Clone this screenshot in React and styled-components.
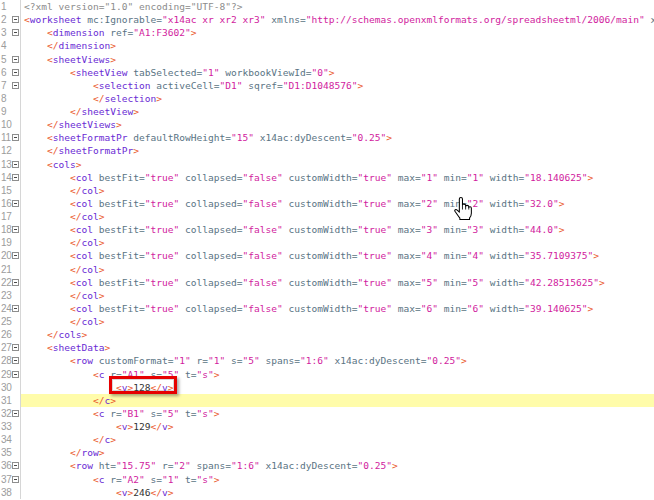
import React from 'react';
import styled, { createGlobalStyle } from 'styled-components';

const Global = createGlobalStyle`
  html, body { margin: 0; padding: 0; background: #fff; overflow: hidden; }
`;

const Editor = styled.div`
  position: relative;
  width: 654px;
  height: 500px;
  overflow: hidden;
  background: #fff;
  font-family: "DejaVu Sans Mono", monospace;
  font-size: 9.55px;
`;

const Row = styled.div`
  display: flex;
  height: 13.14px;
  line-height: 13.14px;
`;

const Gutter = styled.div`
  flex: none;
  width: 20px;
  border-right: 1px solid #d6d6d6;
  display: flex;
  align-items: center;
  font-family: "Liberation Sans", Arial, sans-serif;
  font-size: 10px;
  color: #9c9c9c;
`;

const LineNo = styled.span`
  width: 12px;
  padding-left: 1px;
  box-sizing: border-box;
  white-space: nowrap;
  letter-spacing: -0.3px;
`;

const Fold = styled.span`
  width: 7px;
  height: 7px;
  box-sizing: border-box;
  border: 1px solid #8e8e8e;
  display: flex;
  align-items: center;
  justify-content: center;
  &::after {
    content: '';
    width: 3px;
    height: 1px;
    background: #4a4a4a;
  }
`;

const Code = styled.div`
  flex: 1;
  min-width: 0;
  padding-left: 3px;
  white-space: pre;
  background: ${p => (p.$hl ? '#fffcaa' : 'transparent')};
`;

const COLORS = {
  b: '#ea5a2f',
  t: '#6a2bd4',
  a: '#5a7484',
  v: '#d11c9e',
  p: '#333333',
  d: '#8c8c8c',
};

const Tok = styled.span`
  color: ${p => COLORS[p.$k]};
`;

const Callout = styled.span`
  position: relative;
  z-index: 0;
  &::before {
    content: '';
    position: absolute;
    left: -7px;
    right: -4px;
    top: -6px;
    bottom: -1px;
    border: 3px solid #e60000;
    background: #fff;
    box-shadow: inset 0 0 0 1px #d8d8d8, 2px 2px 3px rgba(0, 0, 0, 0.35);
    z-index: -1;
  }
`;

const Cursor = styled.svg`
  position: absolute;
  left: 454px;
  top: 197px;
  width: 18px;
  height: 23px;
`;

const attrs = list =>
  list.flatMap(([k, v]) => [['p', ' '], ['a', k + '='], ['v', `"${v}"`]]);
const open = (tag, list = []) => [['b', '<'], ['t', tag], ...attrs(list), ['b', '>']];
const close = tag => [['b', '</'], ['t', tag], ['b', '>']];

const colWidths = ['18.140625', '32.0', '44.0', '35.7109375', '42.28515625', '39.140625'];
const colLines = colWidths.flatMap((w, i) => [
  {
    lvl: 2,
    fold: true,
    toks: open('col', [
      ['bestFit', 'true'],
      ['collapsed', 'false'],
      ['customWidth', 'true'],
      ['max', String(i + 1)],
      ['min', String(i + 1)],
      ['width', w],
    ]),
  },
  { lvl: 2, toks: close('col') },
]);

const LINES = [
  { lvl: 0, toks: [['d', '<?xml version="1.0" encoding="UTF-8"?>']] },
  {
    lvl: 0,
    fold: true,
    toks: [
      ['b', '<'],
      ['t', 'worksheet'],
      ...attrs([
        ['mc:Ignorable', 'x14ac xr xr2 xr3'],
        ['xmlns', 'http://schemas.openxmlformats.org/spreadsheetml/2006/main'],
        ['xmlns:mc', 'http://schemas.openxmlformats.org/markup-compatibility/2006'],
      ]),
      ['b', '>'],
    ],
  },
  { lvl: 1, fold: true, toks: open('dimension', [['ref', 'A1:F3602']]) },
  { lvl: 1, toks: close('dimension') },
  { lvl: 1, fold: true, toks: open('sheetViews') },
  { lvl: 2, fold: true, toks: open('sheetView', [['tabSelected', '1'], ['workbookViewId', '0']]) },
  { lvl: 3, fold: true, toks: open('selection', [['activeCell', 'D1'], ['sqref', 'D1:D1048576']]) },
  { lvl: 3, toks: close('selection') },
  { lvl: 2, toks: close('sheetView') },
  { lvl: 1, toks: close('sheetViews') },
  {
    lvl: 1,
    fold: true,
    toks: open('sheetFormatPr', [['defaultRowHeight', '15'], ['x14ac:dyDescent', '0.25']]),
  },
  { lvl: 1, toks: close('sheetFormatPr') },
  { lvl: 1, fold: true, toks: open('cols') },
  ...colLines,
  { lvl: 1, toks: close('cols') },
  { lvl: 1, fold: true, toks: open('sheetData') },
  {
    lvl: 2,
    fold: true,
    toks: open('row', [
      ['customFormat', '1'],
      ['r', '1'],
      ['s', '5'],
      ['spans', '1:6'],
      ['x14ac:dyDescent', '0.25'],
    ]),
  },
  { lvl: 3, fold: true, toks: open('c', [['r', 'A1'], ['s', '5'], ['t', 's']]) },
  { lvl: 4, callout: true, toks: [...open('v'), ['p', '128'], ...close('v')] },
  { lvl: 3, hl: true, toks: close('c') },
  { lvl: 3, fold: true, toks: open('c', [['r', 'B1'], ['s', '5'], ['t', 's']]) },
  { lvl: 4, toks: [...open('v'), ['p', '129'], ...close('v')] },
  { lvl: 3, toks: close('c') },
  { lvl: 2, toks: close('row') },
  {
    lvl: 2,
    fold: true,
    toks: open('row', [
      ['ht', '15.75'],
      ['r', '2'],
      ['spans', '1:6'],
      ['x14ac:dyDescent', '0.25'],
    ]),
  },
  { lvl: 3, fold: true, toks: open('c', [['r', 'A2'], ['s', '1'], ['t', 's']]) },
  { lvl: 4, toks: [...open('v'), ['p', '246'], ...close('v')] },
];

function Line({ n, line }) {
  const content = line.toks.map(([k, s], i) => (
    <Tok key={i} $k={k}>
      {s}
    </Tok>
  ));
  return (
    <Row>
      <Gutter>
        <LineNo>{n}</LineNo>
        {line.fold && <Fold />}
      </Gutter>
      <Code $hl={line.hl}>
        {' '.repeat(line.lvl * 4)}
        {line.callout ? <Callout>{content}</Callout> : content}
      </Code>
    </Row>
  );
}

export default function App() {
  return (
    <>
      <Global />
      <Editor>
        {LINES.map((line, i) => (
          <Line key={i} n={i + 1} line={line} />
        ))}
        <Cursor viewBox="0 0 17 22">
          <path
            d="M5 2 Q5 0.5 6.5 0.5 Q8 0.5 8 2 V7.5 Q8 6.8 9.5 6.8 Q11 6.8 11 8 V8.8 Q11 8 12.5 8 Q14 8 14 9.3 V10 Q14 9.3 15.3 9.3 Q16.5 9.3 16.5 10.8 V15.5 Q16.5 18 14.8 20 V21.5 H5.5 V20.2 Q4.5 19 2.8 16.5 L0.8 13.6 Q0.3 12.6 1.2 12.1 Q2.1 11.7 3 12.6 L5 14.5 Z"
            fill="#fff"
            stroke="#000"
            strokeWidth="1"
            strokeLinejoin="round"
          />
          <path d="M8 7.5 V12 M11 8.8 V12 M14 10 V12" stroke="#000" strokeWidth="0.8" fill="none" />
        </Cursor>
      </Editor>
    </>
  );
}
